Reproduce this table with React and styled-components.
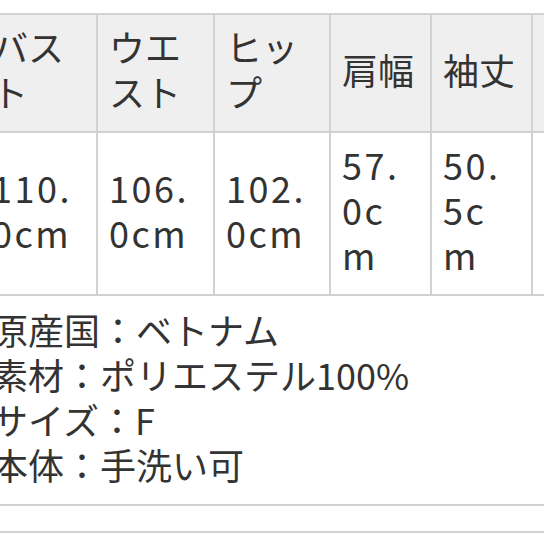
import { createGlobalStyle, styled } from "styled-components";

const GlobalStyle = createGlobalStyle`
  body {
    margin: 0;
    background: #fff;
    font-family: "Noto Sans CJK JP", "Noto Sans", sans-serif;
    color: #333;
  }
`;

const Frame = styled.div`
  width: 544px;
  height: 544px;
  overflow: hidden;
  background: #fff;
`;

const Sheet = styled.div`
  width: 660px;
  margin: 13px 0 0 -19px;
  border-top: 2px solid #d2d2d2;
`;

const SizeGrid = styled.div`
  display: grid;
  grid-template-columns: 117px 117px 116px 101px 101px 208px;
`;

const Cell = styled.div`
  display: flex;
  align-items: center;
  padding: 9px 11px 17px;
  border-right: 2px solid #d2d2d2;
  border-bottom: 2px solid #d2d2d2;
  background: ${(p) => (p.$head ? "#efefef" : "#fff")};
  font-size: 36px;
  line-height: 45px;
  letter-spacing: ${(p) => (p.$head ? "0" : "2.5px")};
  word-break: break-all;
`;

const Notes = styled.div`
  padding: 11px 11px 17px;
  border-bottom: 2px solid #d2d2d2;
  font-size: 36px;
  line-height: 45px;
`;

const NoteLine = styled.div`
  white-space: nowrap;
`;

const BlankRow = styled.div`
  height: 25px;
  border-bottom: 2px solid #d2d2d2;
`;

const headers = ["バスト", "ウエスト", "ヒップ", "肩幅", "袖丈", "着丈"];
const values = ["110.0cm", "106.0cm", "102.0cm", "57.0cm", "50.5cm", "65.0cm"];
const notes = [
  "原産国：ベトナム",
  "素材：ポリエステル100%",
  "サイズ：F",
  "本体：手洗い可",
];

const App = () => {
  return (
    <>
      <GlobalStyle />
      <Frame>
        <Sheet>
          <SizeGrid>
            {headers.map((h) => (
              <Cell $head key={h}>
                {h}
              </Cell>
            ))}
            {values.map((v, i) => (
              <Cell key={i}>{v}</Cell>
            ))}
          </SizeGrid>
          <Notes>
            {notes.map((n) => (
              <NoteLine key={n}>{n}</NoteLine>
            ))}
          </Notes>
          <BlankRow />
        </Sheet>
      </Frame>
    </>
  );
};

export default App;
